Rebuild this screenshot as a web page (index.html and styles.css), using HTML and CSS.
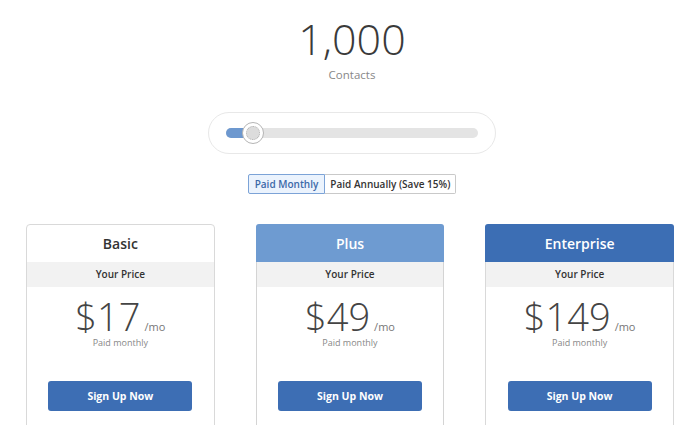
FILE: index.html
```html
<!DOCTYPE html>
<html>
<head>
<meta charset="UTF-8">
<title>Pricing</title>
<link rel="stylesheet" href="styles.css">
</head>
<body>
<div class="page">
    <div class="head">
        <div class="count">
            <div class="count-num">1,000</div>
            <div class="count-label">Contacts</div>
        </div>

        <div class="slider">
            <div class="slider-track">
                <div class="slider-fill" style="width:24px"></div>
                <span class="slider-thumb"><span class="slider-knob"></span></span>
            </div>
        </div>

        <div class="billing">
            <button class="billing-opt active">Paid Monthly</button><button class="billing-opt">Paid Annually (Save 15%)</button>
        </div>
    </div>

    <div class="plans">
        <div class="plan">
            <div class="plan-name">Basic</div>
            <div class="plan-label">Your Price</div>
            <div class="plan-price"><span class="amount">$17</span><span class="per">/mo</span></div>
            <div class="plan-note">Paid monthly</div>
            <a class="plan-btn">Sign Up Now</a>
        </div>
        <div class="plan plus">
            <div class="plan-name">Plus</div>
            <div class="plan-label">Your Price</div>
            <div class="plan-price"><span class="amount">$49</span><span class="per">/mo</span></div>
            <div class="plan-note">Paid monthly</div>
            <a class="plan-btn">Sign Up Now</a>
        </div>
        <div class="plan enterprise">
            <div class="plan-name">Enterprise</div>
            <div class="plan-label">Your Price</div>
            <div class="plan-price"><span class="amount">$149</span><span class="per">/mo</span></div>
            <div class="plan-note">Paid monthly</div>
            <a class="plan-btn">Sign Up Now</a>
        </div>
    </div>
</div>
</body>
</html>
```

FILE: styles.css
```css
body{margin:0;background:#fff;color:#333;font-family:"Open Sans","Liberation Sans",sans-serif;}

.page{width:648px;margin:0 auto;padding-top:16px;}
.head{padding-left:4px;}

/* contacts count */
.count{text-align:center;}
.count-num{font-size:43px;line-height:46px;font-weight:300;color:#3a3a3a;}
.count-label{margin-top:5px;font-size:11.5px;line-height:16px;color:#888;}

/* slider */
.slider{width:252px;margin:29px auto 0;padding:15px 17px 15px 17px;border:1px solid #e8e8e8;border-radius:21px;}
.slider-track{position:relative;height:10px;border-radius:5px;background:#e4e4e4;}
.slider-fill{height:10px;border-radius:5px;background:#6d98cf;}
.slider-thumb{position:absolute;left:16px;top:-6px;width:20px;height:20px;border:1px solid #b5b5b5;border-radius:50%;background:#fff;display:flex;align-items:center;justify-content:center;}
.slider-knob{width:12px;height:12px;border:1px dotted #b0b0b0;border-radius:50%;background:#dcdcdc;}

/* billing toggle */
.billing{display:flex;justify-content:center;margin-top:20px;}
.billing-opt{height:20px;padding:0 5px;margin:0;border:1px solid #c9c9c9;background:#fff;color:#333;font-family:inherit;font-size:10px;font-weight:600;line-height:18px;}
.billing-opt:first-child{padding:0 6px;border-radius:2px 0 0 2px;}
.billing-opt:last-child{border-left:0;border-radius:0 2px 2px 0;}
.billing-opt.active{border-color:#7ca3d7;background:#ebf3fd;color:#3c69a8;}

/* plans */
.plans{display:grid;grid-template-columns:1fr 1fr 1fr;gap:41px;margin-top:30px;}
.plan{border:1px solid #d9d9d9;border-radius:4px;text-align:center;padding-bottom:40px;}
.plan-name{height:37px;line-height:37px;font-size:14px;font-weight:600;color:#333;border-radius:3px 3px 0 0;}
.plan.plus{border-color:#d4d4d4;}
.plan.plus .plan-name{background:#6e9bd1;color:#fff;margin:-1px -1px 0;padding-top:1px;}
.plan.enterprise .plan-name{background:#3c6eb4;color:#fff;margin:-1px -1px 0;padding-top:1px;}
.plan-label{height:25px;line-height:25px;background:#f2f2f2;font-size:10px;font-weight:600;color:#333;}
.plan-price{margin-top:9px;height:40px;font-size:38px;line-height:40px;}
.plan-price .amount{font-weight:300;color:#444;}
.plan-price .per{margin-left:4px;font-size:11px;color:#777;}
.plan-note{margin-top:1px;font-size:9px;line-height:12px;color:#888;}
.plan-btn{display:block;width:144px;height:30px;line-height:30px;margin:32px auto 0;border-radius:3px;background:#3d6eb4;color:#fff;font-size:10.5px;font-weight:700;cursor:pointer;}
```
